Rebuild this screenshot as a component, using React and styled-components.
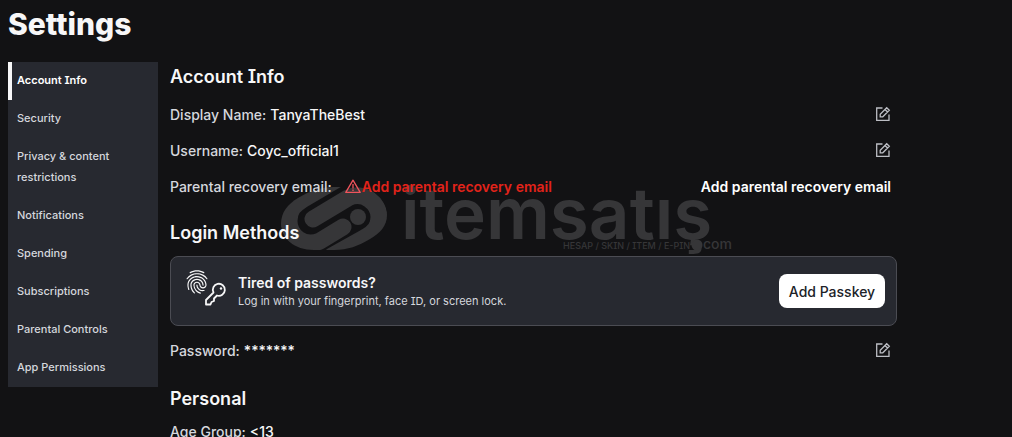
import React from "react";
import styled, { createGlobalStyle } from "styled-components";
import { MdFingerprint } from "react-icons/md";

const GlobalStyle = createGlobalStyle`
  * {
    box-sizing: border-box;
  }
  body {
    margin: 0;
    background: #121214;
    color: #f7f7f8;
    font-family: Inter, "Liberation Sans", sans-serif;
    font-feature-settings: "cv08";
    overflow: hidden;
  }
`;

const Page = styled.div`
  position: relative;
  isolation: isolate;
  padding: 0 8px;
`;
const Title = styled.h1`
  margin: 0;
  height: 62px;
  padding-top: 5px;
  font-size: 30px;
  line-height: 38px;
  font-weight: 800;
`;
const Body = styled.div`
  display: flex;
  align-items: flex-start;
  gap: 12px;
`;
const Sidebar = styled.nav`
  width: 150px;
  flex-shrink: 0;
  background: #272930;
`;
const NavLink = styled.a`
  display: block;
  padding: 8px 32px 9px 9px;
  box-shadow: ${(props) => (props.$active ? "inset 4px 0 #f7f7f8" : "none")};
  color: ${(props) => (props.$active ? "#ffffff" : "#d5d7dd")};
  font-size: 11px;
  font-weight: ${(props) => (props.$active ? 600 : 500)};
  line-height: 21px;
  text-decoration: none;
`;
const Content = styled.main`
  flex: 1;
  max-width: 727px;
`;
const Heading = styled.h2`
  margin: 0;
  padding-top: ${(props) => props.$top}px;
  padding-bottom: ${(props) => props.$bottom || 0}px;
  font-size: 18px;
  font-weight: 600;
  line-height: 28px;
`;
const Row = styled.div`
  display: flex;
  align-items: center;
  justify-content: space-between;
  height: 36px;
  padding-right: 6px;
  font-size: 14px;
  font-weight: 500;
  white-space: nowrap;
`;
const Field = styled.div`
  display: flex;
  align-items: center;
  gap: 4px;
`;
const Label = styled.span`
  color: #d5d7dd;
`;
const Warning = styled.span`
  display: flex;
  align-items: center;
  margin-left: 8px;
  color: #e2231a;
  font-weight: 600;
`;
const IconButton = styled.button`
  display: flex;
  padding: 0;
  border: 0;
  background: none;
  color: #bcbec4;
`;
const TextButton = styled.button`
  padding: 0;
  border: 0;
  background: none;
  color: #ffffff;
  font: inherit;
  font-weight: 600;
`;
const Card = styled.section`
  display: flex;
  align-items: center;
  height: 70px;
  margin: 9px 0 6px;
  padding: 0 11px 0 14px;
  border: 1px solid #4b4c53;
  border-radius: 8px;
  background: #272930;
`;
const CardText = styled.div`
  flex: 1;
  margin-left: 11px;
`;
const CardTitle = styled.h3`
  margin: 0;
  font-size: 14px;
  font-weight: 600;
  line-height: 20px;
`;
const CardNote = styled.p`
  margin: 0;
  color: #d5d7dd;
  font-size: 11px;
  line-height: 16px;
`;
const PasskeyButton = styled.button`
  width: 106px;
  height: 34px;
  padding: 0;
  border: 0;
  border-radius: 8px;
  background: #ffffff;
  color: #202227;
  font: inherit;
  font-size: 14px;
  font-weight: 500;
`;
const Watermark = styled.svg`
  position: absolute;
  left: 276px;
  top: 176px;
  z-index: -1;
  pointer-events: none;
`;

const links = [
  "Account Info",
  "Security",
  "Privacy & content restrictions",
  "Notifications",
  "Spending",
  "Subscriptions",
  "Parental Controls",
  "App Permissions",
];

const EditButton = ({ label }) => (
  <IconButton type="button" aria-label={label}>
    <svg width="16" height="16" viewBox="0 0 16 16" fill="none" stroke="currentColor" strokeWidth="1.3">
      <path d="M7.5 2H1.7v12.3H14V8.5" />
      <path d="M5.2 10.8V8.2l6.5-6.5 2.6 2.6-6.5 6.5zM10 3.5l2.5 2.5" />
    </svg>
  </IconButton>
);

const WarningIcon = () => (
  <svg width="18" height="16" viewBox="0 0 18 16" fill="none" stroke="#f0545c" strokeWidth="1.3">
    <path d="M9 2.2 16.2 14.4H1.8z" strokeLinejoin="round" />
    <path d="M9 6v4.5M9 11.5v1.5" />
  </svg>
);

const PasskeyIcon = () => (
  <svg width="42" height="46" viewBox="0 0 42 46" fill="none" stroke="#f7f7f8" strokeWidth="1.8" overflow="visible">
    <MdFingerprint size={28} x={-2} y={0} color="#f7f7f8" />
    <path d="M28.5 24.5 21 32v4.500h4.500l1-2.500 2.500-1v-2.500l3-3A6 6 0 1 0 28.500 24.500Z" strokeLinejoin="round" />
    <circle cx="36" cy="20.5" r="1.2" fill="#f7f7f8" stroke="none" />
  </svg>
);

const App = () => {
  return (
    <Page>
      <GlobalStyle />
      <Watermark width="460" height="80" viewBox="0 0 460 80" fill="#363638" aria-hidden="true">
        <clipPath id="badge">
          <path d="M5 48C5 36 12 28 22 22C34 15 44 11 58 11H78C98 11 111 23 111 39C111 50 104 57 94 63C82 70 72 74 58 74H38C18 74 5 62 5 48Z" />
        </clipPath>
        <g clipPath="url(#badge)" fill="none" stroke="#363638" strokeLinecap="round">
          <path strokeWidth="17" d="M67 51 44 65C28 72 13 60 13 45C13 34 18 29 26 24L60 4" />
          <path strokeWidth="17" d="M37 43 72 22C88 14 103 28 103 41C103 51 98 56 90 61L56 80" />
        </g>
        <circle cx="82" cy="41" r="8" />
        <text x="125" y="63" fontSize="71" fontWeight="600">itemsatış</text>
        <circle cx="421" cy="69" r="5.5" />
        <text x="287" y="73" fontSize="9" fontWeight="500">HESAP / SKIN / ITEM / E-PIN</text>
        <text x="427" y="73" fontSize="14" fontWeight="500">com</text>
      </Watermark>
      <Title>Settings</Title>
      <Body>
        <Sidebar>
          {links.map((link, i) => (
            <NavLink key={link} href="#" $active={i === 0}>
              {link}
            </NavLink>
          ))}
        </Sidebar>
        <Content>
          <Heading $top={1} $bottom={5}>
            Account Info
          </Heading>
          <Row>
            <Field>
              <Label>Display Name:</Label> TanyaTheBest
            </Field>
            <EditButton label="Edit display name" />
          </Row>
          <Row>
            <Field>
              <Label>Username:</Label> Coyc_official1
            </Field>
            <EditButton label="Edit username" />
          </Row>
          <Row>
            <Field>
              <Label>Parental recovery email:</Label>
              <Warning>
                <WarningIcon />
                Add parental recovery email
              </Warning>
            </Field>
            <TextButton type="button">Add parental recovery email</TextButton>
          </Row>
          <Heading $top={15}>Login Methods</Heading>
          <Card>
            <PasskeyIcon />
            <CardText>
              <CardTitle>Tired of passwords?</CardTitle>
              <CardNote>Log in with your fingerprint, face ID, or screen lock.</CardNote>
            </CardText>
            <PasskeyButton type="button">Add Passkey</PasskeyButton>
          </Card>
          <Row>
            <Field>
              <Label>Password:</Label> *******
            </Field>
            <EditButton label="Edit password" />
          </Row>
          <Heading $top={17}>Personal</Heading>
          <Row>
            <Field>
              <Label>Age Group:</Label> &lt;13
            </Field>
          </Row>
        </Content>
      </Body>
    </Page>
  );
};

export default App;
